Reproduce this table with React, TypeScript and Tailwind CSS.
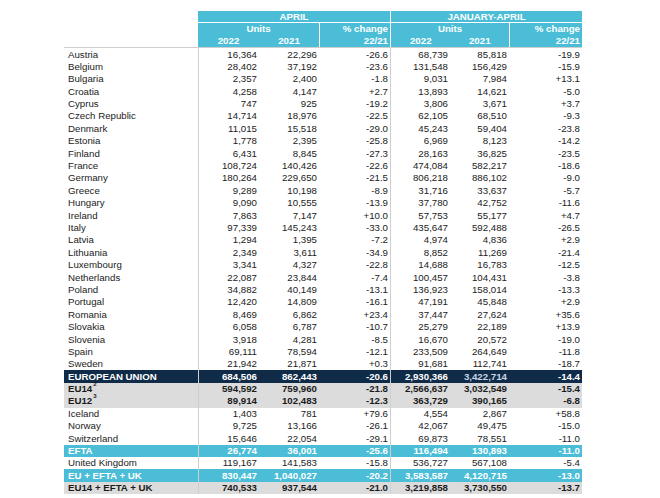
import React from "react"

type Row = {
    name: string
    sup?: string
    v: string[]
    kind?: "eu" | "grey" | "cyan"
}

const rows: Row[] = [
    { name: "Austria", v: ["16,364", "22,296", "-26.6", "68,739", "85,818", "-19.9"] },
    { name: "Belgium", v: ["28,402", "37,192", "-23.6", "131,548", "156,429", "-15.9"] },
    { name: "Bulgaria", v: ["2,357", "2,400", "-1.8", "9,031", "7,984", "+13.1"] },
    { name: "Croatia", v: ["4,258", "4,147", "+2.7", "13,893", "14,621", "-5.0"] },
    { name: "Cyprus", v: ["747", "925", "-19.2", "3,806", "3,671", "+3.7"] },
    { name: "Czech Republic", v: ["14,714", "18,976", "-22.5", "62,105", "68,510", "-9.3"] },
    { name: "Denmark", v: ["11,015", "15,518", "-29.0", "45,243", "59,404", "-23.8"] },
    { name: "Estonia", v: ["1,778", "2,395", "-25.8", "6,969", "8,123", "-14.2"] },
    { name: "Finland", v: ["6,431", "8,845", "-27.3", "28,163", "36,825", "-23.5"] },
    { name: "France", v: ["108,724", "140,426", "-22.6", "474,084", "582,217", "-18.6"] },
    { name: "Germany", v: ["180,264", "229,650", "-21.5", "806,218", "886,102", "-9.0"] },
    { name: "Greece", v: ["9,289", "10,198", "-8.9", "31,716", "33,637", "-5.7"] },
    { name: "Hungary", v: ["9,090", "10,555", "-13.9", "37,780", "42,752", "-11.6"] },
    { name: "Ireland", v: ["7,863", "7,147", "+10.0", "57,753", "55,177", "+4.7"] },
    { name: "Italy", v: ["97,339", "145,243", "-33.0", "435,647", "592,488", "-26.5"] },
    { name: "Latvia", v: ["1,294", "1,395", "-7.2", "4,974", "4,836", "+2.9"] },
    { name: "Lithuania", v: ["2,349", "3,611", "-34.9", "8,852", "11,269", "-21.4"] },
    { name: "Luxembourg", v: ["3,341", "4,327", "-22.8", "14,688", "16,783", "-12.5"] },
    { name: "Netherlands", v: ["22,087", "23,844", "-7.4", "100,457", "104,431", "-3.8"] },
    { name: "Poland", v: ["34,882", "40,149", "-13.1", "136,923", "158,014", "-13.3"] },
    { name: "Portugal", v: ["12,420", "14,809", "-16.1", "47,191", "45,848", "+2.9"] },
    { name: "Romania", v: ["8,469", "6,862", "+23.4", "37,447", "27,624", "+35.6"] },
    { name: "Slovakia", v: ["6,058", "6,787", "-10.7", "25,279", "22,189", "+13.9"] },
    { name: "Slovenia", v: ["3,918", "4,281", "-8.5", "16,670", "20,572", "-19.0"] },
    { name: "Spain", v: ["69,111", "78,594", "-12.1", "233,509", "264,649", "-11.8"] },
    { name: "Sweden", v: ["21,942", "21,871", "+0.3", "91,681", "112,741", "-18.7"] },
    { name: "EUROPEAN UNION", kind: "eu", v: ["684,506", "862,443", "-20.6", "2,930,366", "3,422,714", "-14.4"] },
    { name: "EU14", sup: "2", kind: "grey", v: ["594,592", "759,960", "-21.8", "2,566,637", "3,032,549", "-15.4"] },
    { name: "EU12", sup: "3", kind: "grey", v: ["89,914", "102,483", "-12.3", "363,729", "390,165", "-6.8"] },
    { name: "Iceland", v: ["1,403", "781", "+79.6", "4,554", "2,867", "+58.8"] },
    { name: "Norway", v: ["9,725", "13,166", "-26.1", "42,067", "49,475", "-15.0"] },
    { name: "Switzerland", v: ["15,646", "22,054", "-29.1", "69,873", "78,551", "-11.0"] },
    { name: "EFTA", kind: "cyan", v: ["26,774", "36,001", "-25.6", "116,494", "130,893", "-11.0"] },
    { name: "United Kingdom", v: ["119,167", "141,583", "-15.8", "536,727", "567,108", "-5.4"] },
    { name: "EU + EFTA + UK", kind: "cyan", v: ["830,447", "1,040,027", "-20.2", "3,583,587", "4,120,715", "-13.0"] },
    { name: "EU14 + EFTA + UK", kind: "grey", v: ["740,533", "937,544", "-21.0", "3,219,858", "3,730,550", "-13.7"] },
]

const widths = ["w-[61px]", "w-[60px]", "w-[71px]", "w-[60px]", "w-[59px]", "w-[73px]"]

function DataRow({ row }: { row: Row }) {
    const bg =
        row.kind === "eu" ? "bg-[#0f2b48] text-white font-bold"
            : row.kind === "grey" ? "bg-[#dcdcdc] text-[#1b1b1b] font-bold"
                : row.kind === "cyan" ? "bg-[#4bbdd7] text-white font-bold"
                    : "text-[#222]"
    return (
        <div className={`flex h-[12.4px] items-center leading-none ${bg}`}>
            <div className="w-[134px] pl-[4px] flex items-start">
                <span>{row.name}</span>
                {row.sup && <span className="text-[6px] leading-none -mt-[3px] ml-[1px]">{row.sup}</span>}
            </div>
            {row.v.map((val, i) => (
                <div
                    key={i}
                    className={`${widths[i]} h-full flex items-center justify-end pr-[2px] ${i === 0 || i === 3 ? "border-l border-[#cfcfcf]" : ""} ${row.kind === "eu" && i === 4 ? "text-[#c9d6e6]" : ""}`}
                >
                    {val}
                </div>
            ))}
        </div>
    )
}

export default function App() {
    return (
        <div className="w-[660px] h-[498px] bg-white overflow-hidden font-['Liberation_Sans',Arial,sans-serif] text-[9.7px]">
            <div className="ml-[64px] mt-[11px] w-[518px]">
                {/* header */}
                <div className="flex h-[12.4px] leading-none text-white font-bold">
                    <div className="w-[134px] bg-white" />
                    <div className="w-[192px] bg-[#4bbdd7] border-b border-white flex items-center justify-center">APRIL</div>
                    <div className="w-[192px] bg-[#4bbdd7] border-b border-l border-white flex items-center justify-center">JANUARY-APRIL</div>
                </div>
                <div className="flex h-[24.8px] leading-none text-white font-bold border-b border-[#cfcfcf]">
                    <div className="w-[134px] bg-white" />
                    <div className="w-[121px] bg-[#4bbdd7] flex flex-col">
                        <div className="h-[12.4px] flex items-center justify-center">Units</div>
                        <div className="h-[12.4px] flex">
                            <div className="w-[61px] flex items-center justify-center">2022</div>
                            <div className="w-[60px] flex items-center justify-center">2021</div>
                        </div>
                    </div>
                    <div className="w-[71px] bg-[#4bbdd7] border-l border-white flex flex-col items-end pr-[2px]">
                        <div className="h-[12.4px] flex items-center">% change</div>
                        <div className="h-[12.4px] flex items-center">22/21</div>
                    </div>
                    <div className="w-[119px] bg-[#4bbdd7] border-l border-white flex flex-col">
                        <div className="h-[12.4px] flex items-center justify-center">Units</div>
                        <div className="h-[12.4px] flex">
                            <div className="w-[60px] flex items-center justify-center">2022</div>
                            <div className="w-[59px] flex items-center justify-center">2021</div>
                        </div>
                    </div>
                    <div className="w-[73px] bg-[#4bbdd7] border-l border-white flex flex-col items-end pr-[2px]">
                        <div className="h-[12.4px] flex items-center">% change</div>
                        <div className="h-[12.4px] flex items-center">22/21</div>
                    </div>
                </div>
                {rows.map((r) => (
                    <DataRow key={r.name} row={r} />
                ))}
            </div>
        </div>
    )
}
